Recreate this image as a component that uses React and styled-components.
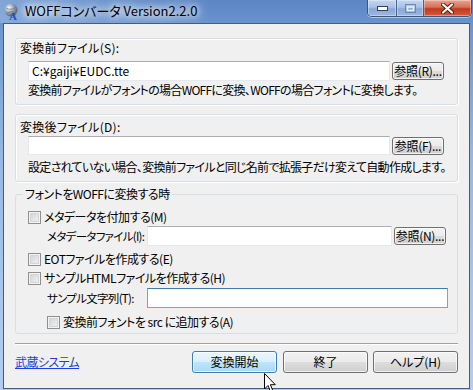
import React from "react";
import styled, { createGlobalStyle } from "styled-components";

const GlobalStyle = createGlobalStyle`
  html, body {
    margin: 0;
    padding: 0;
    background: #6a95cf;
  }
  body {
    font-family: "Noto Sans CJK JP", "Liberation Sans", sans-serif;
    font-size: 12px;
    font-feature-settings: "palt";
  }
`;

const Frame = styled.div`
  position: relative;
  width: 473px;
  height: 390px;
  display: flex;
  flex-direction: column;
  overflow: hidden;
  background: linear-gradient(180deg, #5a86c4 0%, #6f98d0 8%, #97b7e2 40%, #a9c5ea 75%, #b4cdee 100%);
`;

const TitleBar = styled.div`
  height: 23px;
  display: flex;
  align-items: flex-start;
  padding-left: 3px;
  background: linear-gradient(90deg, rgba(160, 190, 230, 0.55) 0%, rgba(255, 255, 255, 0) 45%);
`;

const AppIcon = styled.svg`
  width: 20px;
  height: 20px;
  margin-top: 2px;
  flex: none;
`;

const TitleText = styled.div`
  margin-left: 2px;
  margin-top: 3px;
  line-height: 16px;
  font-size: 13px;
  color: #000;
  text-shadow: 0 0 6px #fff, 0 0 10px #fff, 0 0 14px rgba(255, 255, 255, 0.9);
`;

const Caption = styled.div`
  margin-left: auto;
  margin-right: 1px;
  display: flex;
  height: 16px;
  border: 1px solid #3b5679;
  border-top: none;
  border-radius: 0 0 5px 5px;
  overflow: hidden;
  box-shadow: 0 1px 0 rgba(255, 255, 255, 0.5);
`;

const CapButton = styled.div`
  width: ${(p) => p.$w}px;
  display: flex;
  align-items: center;
  justify-content: center;
  border-left: ${(p) => (p.$first ? "none" : "1px solid #45628a")};
  background: ${(p) =>
    p.$close
      ? "linear-gradient(180deg, #e8a592 0%, #d66f58 45%, #c2391d 55%, #d55b3b 100%)"
      : "linear-gradient(180deg, #c4d6ef 0%, #a9c2e5 45%, #8aa8d6 55%, #9db9e1 100%)"};
  box-shadow: inset 0 0 0 1px rgba(255, 255, 255, 0.35);
`;

const Client = styled.div`
  flex: 1;
  margin: 0 3px 1px 3px;
  border: 1px solid #3f5e86;
  background: #f0f0f0;
  padding: 14px 11px 0 11px;
  display: flex;
  flex-direction: column;
`;

const Group = styled.div`
  border: 1px solid #d5dfe5;
  border-radius: 3px;
  box-shadow: inset 1px 1px 0 #fff, 1px 1px 0 #fff;
  margin-top: ${(p) => p.$mt || 0}px;
  padding: ${(p) => p.$pt}px 6px ${(p) => p.$pb}px 4px;
`;

const Label = styled.div`
  line-height: 14px;
  color: #000;
  white-space: nowrap;
  letter-spacing: 0.3px;
`;

const FileRow = styled.div`
  display: flex;
  align-items: center;
  gap: 2px;
  margin-top: ${(p) => p.$mt}px;
  margin-left: ${(p) => p.$ml || 8}px;
`;

const TextBox = styled.div`
  box-sizing: border-box;
  width: ${(p) => p.$w}px;
  height: ${(p) => p.$h || 20}px;
  background: #fff;
  border: 1px solid ${(p) => (p.$focus ? "#7da2ce" : "#e3e9ef")};
  border-top-color: ${(p) => (p.$focus ? "#3d7bad" : "#abadb3")};
  padding: 0 3px;
  line-height: ${(p) => (p.$h || 20) - 2}px;
  color: #000;
  white-space: nowrap;
`;

const SmallButton = styled.div`
  box-sizing: border-box;
  width: 52px;
  height: 18px;
  border: 1px solid #707070;
  border-radius: 3px;
  background: linear-gradient(180deg, #f2f2f2 0%, #ebebeb 50%, #dddddd 50%, #cfcfcf 100%);
  box-shadow: inset 0 0 0 1px rgba(255, 255, 255, 0.7);
  display: flex;
  align-items: center;
  justify-content: center;
  line-height: 14px;
  color: #000;
  white-space: nowrap;
  letter-spacing: -0.3px;
`;

const Note = styled.div`
  margin-top: ${(p) => p.$mt}px;
  margin-left: 8px;
  line-height: 14px;
  color: #000;
  white-space: nowrap;
  letter-spacing: -0.7px;
`;

const Fieldset = styled.fieldset`
  margin: 5px 0 0 0;
  padding: 0 6px 3px 12px;
  border: 1px solid #d5dfe5;
  border-radius: 3px;
  min-width: 0;
`;

const Legend = styled.legend`
  margin-left: -5px;
  padding: 0 2px;
  line-height: 14px;
  color: #000;
  letter-spacing: -0.5px;
`;

const CheckRow = styled.label`
  display: flex;
  align-items: center;
  gap: 3px;
  height: 16px;
  margin-top: ${(p) => p.$mt}px;
  margin-left: ${(p) => p.$ml || 0}px;
  line-height: 14px;
  color: #000;
  white-space: nowrap;
  letter-spacing: -0.5px;
`;

const Box = styled.span`
  box-sizing: border-box;
  width: 13px;
  height: 13px;
  flex: none;
  border: 1px solid #8e8f8f;
  background: #f4f4f4;
  box-shadow: inset 0 0 0 1px #f4f4f4, inset 0 0 0 2px #d5d5d5;
  background-image: linear-gradient(135deg, #cbcfd5 0%, #f6f6f6 100%);
  background-clip: content-box;
  padding: 2px;
`;

const FieldLabel = styled.span`
  width: 98px;
  flex: none;
  line-height: 14px;
  font-size: 11.5px;
  color: #000;
  white-space: nowrap;
  letter-spacing: -0.7px;
`;

const Separator = styled.div`
  margin-top: 9px;
  height: 1px;
  background: #a0a0a0;
  border-bottom: 1px solid #fff;
`;

const Footer = styled.div`
  margin-top: 6px;
  display: flex;
  align-items: center;
`;

const Link = styled.a`
  color: #1c3fd8;
  text-decoration: underline;
  line-height: 14px;
  margin-right: auto;
  cursor: pointer;
  letter-spacing: -0.6px;
`;

const DialogButton = styled.div`
  box-sizing: border-box;
  width: 85px;
  height: 22px;
  margin-left: ${(p) => p.$ml}px;
  border: 1px solid ${(p) => (p.$focus ? "#3c7fb1" : "#707070")};
  border-radius: 3px;
  background: ${(p) =>
    p.$focus
      ? "linear-gradient(180deg, #eaf6fd 0%, #d9f0fc 50%, #bee6fd 50%, #a7d9f5 100%)"
      : "linear-gradient(180deg, #f2f2f2 0%, #ebebeb 50%, #dddddd 50%, #cfcfcf 100%)"};
  box-shadow: inset 0 0 0 1px rgba(255, 255, 255, 0.7);
  display: flex;
  align-items: center;
  justify-content: center;
  color: #000;
  line-height: 14px;
`;

const Pointer = styled.svg`
  position: absolute;
  left: 264px;
  top: 373px;
  width: 13px;
  height: 20px;
`;

const Checkbox = ({ children, mt, ml }) => (
  <CheckRow $mt={mt} $ml={ml}>
    <Box />
    <span>{children}</span>
  </CheckRow>
);

export default function App() {
  return (
    <>
      <GlobalStyle />
      <Frame>
        <TitleBar>
          <AppIcon viewBox="0 0 20 20">
            <defs>
              <radialGradient id="globe" cx="0.35" cy="0.35" r="0.7">
                <stop offset="0" stopColor="#ffffff" />
                <stop offset="0.5" stopColor="#9aa6b4" />
                <stop offset="1" stopColor="#4c5866" />
              </radialGradient>
            </defs>
            <circle cx="8" cy="8" r="6.5" fill="url(#globe)" />
            <path d="M3 6 Q8 9 13 5 M4 11 Q8 8 13 11" stroke="#6c7785" strokeWidth="0.8" fill="none" />
            <text x="6" y="18" fontSize="11" fontWeight="bold" fill="#1f4fb8" fontFamily="Liberation Serif, serif">
              A
            </text>
          </AppIcon>
          <TitleText>WOFFコンバータ Version2.2.0</TitleText>
          <Caption>
            <CapButton $w={28} $first>
              <svg width="11" height="5" viewBox="0 0 11 5">
                <rect x="0.5" y="0.5" width="10" height="4" fill="#fff" stroke="#2f4463" />
              </svg>
            </CapButton>
            <CapButton $w={26}>
              <svg width="11" height="9" viewBox="0 0 11 9">
                <rect x="0.5" y="0.5" width="10" height="8" fill="none" stroke="#6f88ab" />
                <rect x="2.5" y="3" width="6" height="3.5" fill="none" stroke="#e8eef7" strokeWidth="1.5" />
              </svg>
            </CapButton>
            <CapButton $w={47} $close>
              <svg width="13" height="11" viewBox="0 0 13 11">
                <path d="M2 1.5 L11 9.5 M11 1.5 L2 9.5" stroke="#5a1a10" strokeWidth="4" strokeLinecap="round" />
                <path d="M2 1.5 L11 9.5 M11 1.5 L2 9.5" stroke="#fff" strokeWidth="2.2" strokeLinecap="round" />
              </svg>
            </CapButton>
          </Caption>
        </TitleBar>

        <Client>
          <Group $pt={2} $pb={7}>
            <Label>変換前ファイル(S):</Label>
            <FileRow $mt={6}>
              <TextBox $w={362}>C:¥gaiji¥EUDC.tte</TextBox>
              <SmallButton>参照(R)...</SmallButton>
            </FileRow>
            <Note $mt={2}>変換前ファイルがフォントの場合WOFFに変換、WOFFの場合フォントに変換します。</Note>
          </Group>

          <Group $mt={9} $pt={5} $pb={7}>
            <Label>変換後ファイル(D):</Label>
            <FileRow $mt={2}>
              <TextBox $w={362} $h={19} />
              <SmallButton>参照(F)...</SmallButton>
            </FileRow>
            <Note $mt={5}>設定されていない場合、変換前ファイルと同じ名前で拡張子だけ変えて自動作成します。</Note>
          </Group>

          <Fieldset>
            <Legend>フォントをWOFFに変換する時</Legend>
            <Checkbox mt={8}>メタデータを付加する(M)</Checkbox>
            <FileRow $mt={1} $ml={19}>
              <FieldLabel>メタデータファイル(I):</FieldLabel>
              <TextBox $w={245} />
              <SmallButton>参照(N)...</SmallButton>
            </FileRow>
            <Checkbox mt={5}>EOTファイルを作成する(E)</Checkbox>
            <Checkbox mt={3}>サンプルHTMLファイルを作成する(H)</Checkbox>
            <FileRow $mt={2} $ml={19}>
              <FieldLabel>サンプル文字列(T):</FieldLabel>
              <TextBox $w={301} $focus />
            </FileRow>
            <Checkbox mt={6} ml={19}>
              変換前フォントを src に追加する(A)
            </Checkbox>
          </Fieldset>

          <Separator />

          <Footer>
            <Link>武蔵システム</Link>
            <DialogButton $focus>変換開始</DialogButton>
            <DialogButton $ml={6}>終了</DialogButton>
            <DialogButton $ml={5}>ヘルプ(H)</DialogButton>
          </Footer>
        </Client>

        <Pointer viewBox="0 0 13 20">
          <path d="M0.5 0.5 L0.5 16 L4 12.5 L6.5 18.5 L8.8 17.5 L6.4 11.7 L11.3 11.7 Z" fill="#fff" stroke="#000" strokeWidth="1" />
        </Pointer>
      </Frame>
    </>
  );
}
